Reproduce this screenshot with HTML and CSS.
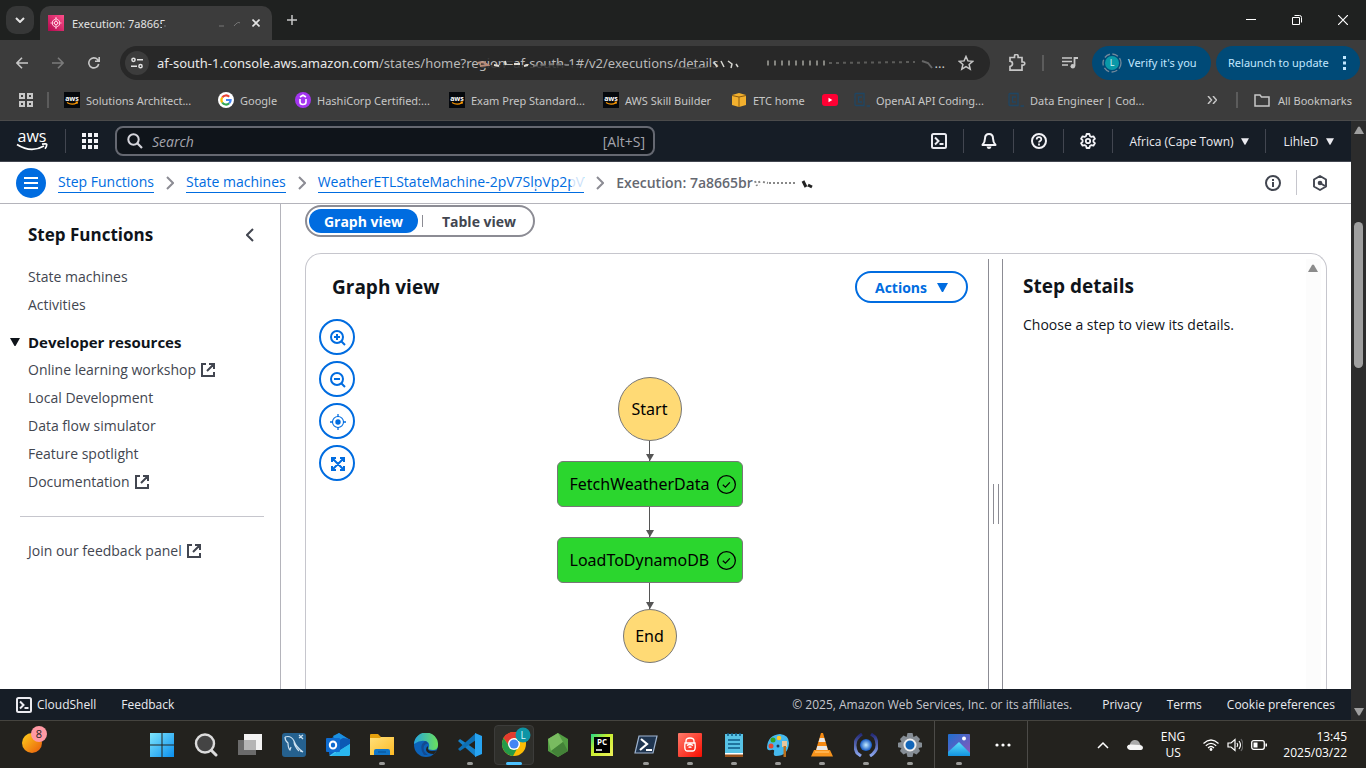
FILE: index.html
```html
<!DOCTYPE html>
<html lang="en">
<head>
<meta charset="utf-8">
<title>Execution details - Step Functions</title>
<link rel="stylesheet" href="styles.css">
</head>
<body>
<svg class="defs" aria-hidden="true">
  <defs>
    <linearGradient id="g-sun" x1="0" y1="0" x2="1" y2="1"><stop offset="0" stop-color="#ffd21c"/><stop offset="1" stop-color="#e8590c"/></linearGradient>
    <linearGradient id="g-win" x1="0" y1="0" x2="1" y2="1"><stop offset="0" stop-color="#7fe6fd"/><stop offset="1" stop-color="#0a8fee"/></linearGradient>
    <linearGradient id="g-folder" x1="0" y1="0" x2="1" y2="1"><stop offset="0" stop-color="#ffe07a"/><stop offset="1" stop-color="#fdba25"/></linearGradient>
    <linearGradient id="g-edge" x1="0" y1="0" x2="1" y2="0"><stop offset="0" stop-color="#25a5e0"/><stop offset="1" stop-color="#6be05a"/></linearGradient>
    <linearGradient id="g-lock" x1="0" y1="0" x2="1" y2="1"><stop offset="0" stop-color="#ff7b6b"/><stop offset="1" stop-color="#f80d00"/></linearGradient>
    <linearGradient id="g-pc" x1="0" y1="0" x2="1" y2="1"><stop offset="0" stop-color="#21d789"/><stop offset="0.4" stop-color="#c5ee2e"/><stop offset="1" stop-color="#eff15a"/></linearGradient>
    <linearGradient id="g-photo" x1="0" y1="0" x2="1" y2="1"><stop offset="0" stop-color="#1e6fd0"/><stop offset="1" stop-color="#9156b8"/></linearGradient>
    <linearGradient id="g-mtn" x1="0" y1="0" x2="0" y2="1"><stop offset="0" stop-color="#5ee0fb"/><stop offset="1" stop-color="#1292e0"/></linearGradient>
    <linearGradient id="g-sfn" x1="0" y1="1" x2="1" y2="0"><stop offset="0" stop-color="#b0084d"/><stop offset="1" stop-color="#ff4f8b"/></linearGradient>
    <linearGradient id="g-swirl" x1="0" y1="0" x2="0" y2="1"><stop offset="0" stop-color="#242a78"/><stop offset="1" stop-color="#8ba6ee"/></linearGradient>
    <radialGradient id="g-globe"><stop offset="0" stop-color="#c6ecff"/><stop offset="1" stop-color="#1257c4"/></radialGradient>
  </defs>
  <symbol id="i-awsfav" viewBox="0 0 16 16"><rect width="16" height="16" fill="#05080c"/><text x="8" y="9" class="fav-text">aws</text><path d="M3 10.500q5 3.200 10 .2M11.500 10h2l-.6 1.900" fill="none" stroke="#ff9900" stroke-width="1.100"/></symbol>
  <symbol id="i-cc" viewBox="0 0 16 16"><path d="M1 2.500q0-1 1-1h8v12H2q-1 0-1-1zM8 5H4.500v5H8M12.500 14h3.500" fill="none" stroke="#1f4663" stroke-width="1.300"/></symbol>
  <symbol id="i-shell" viewBox="0 0 16 16"><rect x="1" y="1" width="14" height="14" rx="1.500" fill="none" stroke="currentColor" stroke-width="2"/><path d="M4 4.500 7.500 8 4 11.500M8.500 11h4" fill="none" stroke="currentColor" stroke-width="2"/></symbol>
  <symbol id="i-ext" viewBox="0 0 16 16"><path d="M6 2H2v12h12v-4M9 2h5v5M14 2 7 9" fill="none" stroke="currentColor" stroke-width="2"/></symbol>
  <symbol id="i-caret" viewBox="0 0 10 8"><path d="M0 0h10L5.500 8h-1z" fill="currentColor"/></symbol>
  <symbol id="i-next" viewBox="0 0 8 14"><path d="M1 1l6 6-6 6" fill="none" stroke="#8c8c94" stroke-width="2"/></symbol>
  <symbol id="i-check" viewBox="0 0 18 18"><circle cx="9" cy="9" r="8.400" fill="none" stroke="#000" stroke-width="1.200"/><path d="M5.500 9.300 8 11.500l4.200-4.500" fill="none" stroke="#000" stroke-width="1.200"/></symbol>
  <symbol id="i-tip" viewBox="0 0 8 7"><path d="M0 0h8L4 7z" fill="#555"/></symbol>
</svg>

<header class="browser">
  <div class="tabstrip">
    <button class="tab-search" aria-label="Search tabs"><svg width="10" height="6" viewBox="0 0 10 6"><path d="M1 1l4 4 4-4" fill="none" stroke="#e3e3e3" stroke-width="2"/></svg></button>
    <div class="tab">
      <svg width="16" height="16" viewBox="0 0 16 16"><rect width="16" height="16" fill="url(#g-sfn)"/><path d="M8 2v12M8 3.500L4.500 6v4L8 12.500l3.500-2.500V6zM2.500 8h3M10.500 8h3" fill="none" stroke="#ffc4d8" stroke-width="1"/><circle cx="8" cy="8" r="1.700" fill="#e52c73" stroke="#ffd0e0"/></svg>
      <span class="tab-title">Execution: 7a8665</span>
      <svg class="tab-smudge" width="82" height="14" viewBox="0 0 82 14"><path d="M0 6h7v7H0z" fill="#3c3c3c"/><path d="M2 10h2M57 10h5M72 10q4-5 6-3" stroke="#777" stroke-width="1" fill="none"/></svg>
      <button class="plain" aria-label="Close tab"><svg width="8" height="8" viewBox="0 0 8 8"><path d="M0.500.5l7 7M7.500.5l-7 7" stroke="#e3e3e3" stroke-width="1.600"/></svg></button>
    </div>
    <button class="plain new-tab" aria-label="New tab"><svg width="10" height="10" viewBox="0 0 10 10"><path d="M5 0v10M0 5h10" stroke="#c7c7c7" stroke-width="1.500"/></svg></button>
    <div class="win-controls">
      <button class="plain" aria-label="Minimize"><svg width="10" height="10" viewBox="0 0 10 10"><path d="M0 4.500h10" stroke="#fff"/></svg></button>
      <button class="plain" aria-label="Restore"><svg width="10" height="10" viewBox="0 0 10 10"><path d="M.5 2.500h7v7h-7zM2.500.5h5q2 0 2 2v5" fill="none" stroke="#fff"/></svg></button>
      <button class="plain" aria-label="Close"><svg width="10" height="10" viewBox="0 0 10 10"><path d="M0 0l10 10M10 0L0 10" stroke="#fff" stroke-width="1.200"/></svg></button>
    </div>
  </div>

  <div class="toolbar">
    <div class="nav-buttons">
      <button class="plain" aria-label="Back"><svg width="12" height="12" viewBox="0 0 12 12"><path d="M12 6H1M6 .8L.9 6 6 11.200" fill="none" stroke="#c7c7c7" stroke-width="1.600"/></svg></button>
      <button class="plain" aria-label="Forward"><svg width="12" height="12" viewBox="0 0 12 12"><path d="M0 6h11M6 .8L11.100 6 6 11.200" fill="none" stroke="#7b7b7b" stroke-width="1.600"/></svg></button>
      <button class="plain" aria-label="Reload"><svg width="12" height="12" viewBox="0 0 12 12"><path d="M10.700 7A5 5 0 1 1 9.600 2.600L11 4M11.200 0v4.300H7" fill="none" stroke="#c7c7c7" stroke-width="1.600"/></svg></button>
    </div>
    <div class="omnibox">
      <button class="site-info" aria-label="View site information"><svg width="12" height="12" viewBox="0 0 12 12"><g fill="none" stroke="#e3e3e3" stroke-width="1.500"><circle cx="2.500" cy="2.800" r="1.600"/><path d="M6 2.800h6M0 9.200h6"/><circle cx="9.500" cy="9.200" r="1.600"/></g></svg></button>
      <div class="url"><span class="host">af-south-1.console.aws.amazon.com</span>/states/home?region=af-south-1#/v2/executions/details
        <svg class="url-smudge" viewBox="0 0 470 18" width="470" height="18"><path d="M12 11h100v3H12zM14 4h18v3H14zM38 5h8v4h-8zM205 13h66v4h-66z" fill="#282828" opacity=".85"/><g fill="none"><path d="M11 9q5-2 10 2l-8 1" stroke="#b98a76" stroke-width="2"/><path d="M27 11l5 1m6-5l1 4m8-1h6m4 2l4-1" stroke="#e0ddd6" stroke-width="2"/><path d="M66 12q14-3 36-1" stroke="#777" stroke-width="2" stroke-dasharray="5 3"/><path d="M210 13q14 3 30 0" stroke="#666" stroke-width="1"/><path d="M247 8l3 5m4-6l3 6m4-6l4 3-1 4m5-4l2 3" stroke="#d5d5d0" stroke-width="1.500"/><path d="M300 9l60 0" stroke="#858580" stroke-width="5" stroke-dasharray="2 5"/><path d="M362 9l86-1" stroke="#5c5c5a" stroke-width="2" stroke-dasharray="3 4"/><path d="M455 7l6 2 4 5" stroke="#666" stroke-width="2"/></g></svg>
      </div>
      <span class="url-end">...</span>
      <button class="plain star" aria-label="Bookmark this tab"><svg width="16" height="16" viewBox="0 0 16 16"><path d="M8 1.500l1.900 4.400 4.800.4-3.600 3.100 1.100 4.700L8 11.600l-4.200 2.500 1.100-4.700L1.300 6.300l4.800-.4z" fill="none" stroke="#c7c7c7" stroke-width="1.500"/></svg></button>
    </div>
    <button class="plain ext" aria-label="Extensions"><svg width="18" height="18" viewBox="0 0 18 18"><path d="M2 3.500h4.500V2.200a1.800 1.800 0 0 1 3.600 0v1.300H14V8h1.200a1.600 1.600 0 0 1 0 3.200H14v5H2v-3.700q2.500-.5 2.500-2.700T2 7.200z" fill="none" stroke="#c7c7c7" stroke-width="1.700"/></svg></button>
    <span class="bar"></span>
    <button class="plain media" aria-label="Media controls"><svg width="16" height="14" viewBox="0 0 16 14"><path d="M0 2h10M0 5.500h10M0 9h6" stroke="#c7c7c7" stroke-width="1.600"/><path d="M16 2h-3.500v8" fill="none" stroke="#c7c7c7" stroke-width="1.800"/><circle cx="10.800" cy="10.200" r="2.300" fill="#c7c7c7"/></svg></button>
    <button class="pill verify"><svg width="20" height="20" viewBox="0 0 20 20"><circle cx="10" cy="10" r="9" fill="none" stroke="#73899b" stroke-width="1.300" stroke-dasharray="6 2.500"/><circle cx="10" cy="10" r="7" fill="#0a99a8"/><text x="10" y="13" class="avatar-text">L</text></svg>Verify it's you</button>
    <button class="pill relaunch">Relaunch to update<svg width="4" height="14" viewBox="0 0 4 14"><path d="M0 0h3v3H0zM0 5.500h3v3H0zM0 11h3v3H0z" fill="#c2e7ff"/></svg></button>
  </div>

  <nav class="bookmarks" aria-label="Bookmarks">
    <button class="plain apps" aria-label="Apps"><svg width="14" height="14" viewBox="0 0 14 14"><path d="M1 1h4v4H1zM9 1h4v4H9zM1 9h4v4H1zM9 9h4v4H9z" fill="none" stroke="#c7c7c7" stroke-width="2"/></svg></button>
    <span class="bar"></span>
    <a href="#" class="b1"><svg width="16" height="16"><use href="#i-awsfav"/></svg>Solutions Architect...</a>
    <a href="#" class="b2"><svg width="16" height="16" viewBox="0 0 16 16"><circle cx="8" cy="8" r="8" fill="#fff"/><g fill="none" stroke-width="2.200"><path d="M4.200 5.500A4.600 4.600 0 0 1 11.200 4.700" stroke="#ea4335"/><path d="M4.200 10.500a4.600 4.600 0 0 1 0-5" stroke="#fbbc05"/><path d="M4.200 10.500a4.600 4.600 0 0 0 7 .8" stroke="#34a853"/><path d="M8 8h4.600a4.600 4.600 0 0 1-1.400 3.300" stroke="#4285f4"/></g></svg>Google</a>
    <a href="#" class="b3"><svg width="16" height="16" viewBox="0 0 16 16"><circle cx="8" cy="8" r="8" fill="#a435f0"/><path d="M5 7v3q0 2.500 3 2.500t3-2.500V7M5 5l3-1.800L11 5" fill="none" stroke="#fff" stroke-width="1.600"/></svg>HashiCorp Certified:...</a>
    <a href="#" class="b4"><svg width="16" height="16"><use href="#i-awsfav"/></svg>Exam Prep Standard...</a>
    <a href="#" class="b5"><svg width="16" height="16"><use href="#i-awsfav"/></svg>AWS Skill Builder</a>
    <a href="#" class="b6"><svg width="16" height="16" viewBox="0 0 16 16"><path d="M1 3l7-2 7 2v10l-7 2-7-2z" fill="#f2b02e"/><path d="M1 3.500L8 5l7-1.500M8 5v10" fill="none" stroke="#8a5a10"/></svg>ETC home</a>
    <a href="#" class="b7" aria-label="YouTube"><svg width="16" height="12" viewBox="0 0 16 12"><rect width="16" height="12" rx="3" fill="#ff0033"/><path d="M6.500 3.800v4.400L10.300 6z" fill="#fff"/></svg></a>
    <a href="#" class="b8"><svg width="16" height="16"><use href="#i-cc"/></svg>OpenAI API Coding...</a>
    <a href="#" class="b9"><svg width="16" height="16"><use href="#i-cc"/></svg>Data Engineer | Cod...</a>
    <button class="plain more" aria-label="More bookmarks"><svg width="10" height="8" viewBox="0 0 10 8"><path d="M1 0l3.500 4L1 8M6 0l3.500 4L6 8" fill="none" stroke="#c7c7c7" stroke-width="1.500"/></svg></button>
    <span class="bar"></span>
    <button class="plain all"><svg width="16" height="13" viewBox="0 0 16 13"><path d="M1 1h5l1.500 2H15v9H1z" fill="none" stroke="#c7c7c7" stroke-width="1.500"/></svg>All Bookmarks</button>
  </nav>
</header>

<div class="viewport">
  <div class="console">
    <header class="aws-nav">
      <a href="#" class="aws-logo" aria-label="AWS home"><svg width="34" height="24" viewBox="0 0 34 24"><text x="16" y="13" class="logo-text">aws</text><path d="M1 15.500q14 9 27 1.500M26 15.200q5-1 4.700.6 0 2-1.700 4" fill="none" stroke="#fff" stroke-width="1.700"/></svg></a>
      <span class="sep"></span>
      <button class="plain grid-btn" aria-label="Services"><svg width="16" height="16" viewBox="0 0 16 16"><path d="M0 0h4v4H0zM6 0h4v4H6zM12 0h4v4h-4zM0 6h4v4H0zM6 6h4v4H6zM12 6h4v4h-4zM0 12h4v4H0zM6 12h4v4H6zM12 12h4v4h-4z" fill="#f3f3f7"/></svg></button>
      <label class="search">
        <svg width="16" height="16" viewBox="0 0 16 16"><circle cx="6.500" cy="6.500" r="5.200" fill="none" stroke="#d5d5dc" stroke-width="2"/><path d="M10.300 10.300l4.700 4.700" stroke="#d5d5dc" stroke-width="2.200"/></svg>
        <input type="search" placeholder="Search" aria-label="Search">
        <span>[Alt+S]</span>
      </label>
      <div class="aws-tools">
        <button class="plain" aria-label="CloudShell"><svg width="16" height="16"><use href="#i-shell"/></svg></button>
        <button class="plain" aria-label="Notifications"><svg width="16" height="16" viewBox="0 0 16 16"><path d="M8 1q-4 0-4 4.500 0 3.500-2.500 6.500h13Q12 9 12 5.500 12 1 8 1z" fill="none" stroke="#f3f3f7" stroke-width="2" stroke-linejoin="round"/><path d="M5.500 13.500h5q-.5 2.500-2.500 2.500t-2.500-2.500z" fill="#f3f3f7"/></svg></button>
        <button class="plain" aria-label="Help"><svg width="16" height="16" viewBox="0 0 16 16"><circle cx="8" cy="8" r="7" fill="none" stroke="#f3f3f7" stroke-width="2"/><path d="M5.700 6.500q0-2.300 2.300-2.300t2.300 2q0 1.300-1.300 1.900-1 .5-1 1.400M8 10.600v1.900" fill="none" stroke="#f3f3f7" stroke-width="1.800"/></svg></button>
        <button class="plain" aria-label="Settings"><svg width="16" height="16" viewBox="0 0 16 16"><path d="M6.600 1h2.800l.5 2 1.500.9 2-.6 1.500 2.500L13.400 7.200v1.600l1.500 1.400-1.500 2.500-2-.6-1.500.9-.5 2H6.600l-.5-2-1.500-.9-2 .6-1.500-2.500 1.500-1.400V7.200L1.100 5.800l1.500-2.500 2 .6L6.100 3z" fill="none" stroke="#f3f3f7" stroke-width="1.800" stroke-linejoin="round"/><circle cx="8" cy="8" r="2.200" fill="none" stroke="#f3f3f7" stroke-width="1.800"/></svg></button>
        <button class="plain region">Africa (Cape Town)<svg width="8" height="7"><use href="#i-caret"/></svg></button>
        <button class="plain user">LihleD<svg width="8" height="7"><use href="#i-caret"/></svg></button>
      </div>
    </header>

    <div class="crumbs">
      <button class="menu-btn" aria-label="Open navigation"><svg width="14" height="12" viewBox="0 0 14 12"><path d="M0 1h14M0 6h14M0 11h14" stroke="#fff" stroke-width="2"/></svg></button>
      <nav class="crumb-list" aria-label="Breadcrumbs">
        <a href="#">Step Functions</a>
        <svg width="8" height="14"><use href="#i-next"/></svg>
        <a href="#">State machines</a>
        <svg width="8" height="14"><use href="#i-next"/></svg>
        <a href="#">WeatherETLStateMachine-2pV7SlpVp2pV<svg class="link-smudge" width="76" height="16" viewBox="0 0 76 16"><path d="M10 0h4v3h-4zM26 11l10 4H25zM34 0l5 0-3 5zM62 0h14v15H64z" fill="#fff" opacity=".8"/></svg></a>
        <svg width="8" height="14"><use href="#i-next"/></svg>
        <span class="current">Execution: 7a8665br<svg class="exec-smudge" width="72" height="12" viewBox="0 0 72 12"><path d="M2 9h9v3H2z" fill="#fff"/><path d="M8 3l2 5M12 3l1 4M16 4l5 1M22 5h26" stroke="#888" stroke-width="2" stroke-dasharray="2 2" fill="none"/><path d="M56 3l3 6M61 7l4 2" stroke="#222" stroke-width="3"/></svg></span>
      </nav>
      <button class="plain info" aria-label="Info"><svg width="16" height="16" viewBox="0 0 16 16"><circle cx="8" cy="8" r="7" fill="none" stroke="#424650" stroke-width="2"/><path d="M8 4v2M8 7v5" stroke="#424650" stroke-width="2"/></svg></button>
      <button class="plain q" aria-label="Resources"><svg width="16" height="16" viewBox="0 0 16 16"><path d="M8 1l6 3.500v7L8 15l-6-3.500v-7z" fill="none" stroke="#424650" stroke-width="1.900" stroke-linejoin="round"/><circle cx="8" cy="8" r="2.300" fill="#424650"/><path d="M8 8l5 3" stroke="#424650" stroke-width="2"/></svg></button>
    </div>

    <div class="body">
      <aside class="side">
        <div class="side-head"><h2>Step Functions</h2><button class="plain" aria-label="Close navigation"><svg width="8" height="14" viewBox="0 0 8 14"><path d="M7 1L1 7l6 6" fill="none" stroke="#424650" stroke-width="2"/></svg></button></div>
        <ul>
          <li><a href="#">State machines</a></li>
          <li><a href="#">Activities</a></li>
        </ul>
        <button class="plain section"><svg width="10" height="8"><use href="#i-caret"/></svg>Developer resources</button>
        <ul>
          <li><a href="#">Online learning workshop<svg width="16" height="16"><use href="#i-ext"/></svg></a></li>
          <li><a href="#">Local Development</a></li>
          <li><a href="#">Data flow simulator</a></li>
          <li><a href="#">Feature spotlight</a></li>
          <li><a href="#">Documentation<svg width="16" height="16"><use href="#i-ext"/></svg></a></li>
        </ul>
        <hr>
        <ul><li><a href="#">Join our feedback panel<svg width="16" height="16"><use href="#i-ext"/></svg></a></li></ul>
      </aside>

      <main class="main">
        <div class="segments">
          <button class="seg on">Graph view</button><span></span><button class="seg">Table view</button>
        </div>
        <section class="panel">
          <div class="graph">
            <div class="graph-head"><h1>Graph view</h1><button class="actions">Actions<svg width="11" height="9"><use href="#i-caret"/></svg></button></div>
            <div class="canvas">
              <div class="zoomers">
                <button aria-label="Zoom in"><svg width="16" height="16" viewBox="0 0 16 16"><circle cx="7" cy="7" r="6" fill="none" stroke="currentColor" stroke-width="2"/><path d="M11 11l4 4M4 7h6M7 4v6" stroke="currentColor" stroke-width="2"/></svg></button>
                <button aria-label="Zoom out"><svg width="16" height="16" viewBox="0 0 16 16"><circle cx="7" cy="7" r="6" fill="none" stroke="currentColor" stroke-width="2"/><path d="M11 11l4 4M4 7h6" stroke="currentColor" stroke-width="2"/></svg></button>
                <button aria-label="Center"><svg width="16" height="16" viewBox="0 0 16 16"><circle cx="8" cy="8" r="5.500" fill="none" stroke="currentColor" stroke-width="1.100"/><circle cx="8" cy="8" r="2.700" fill="currentColor"/><path d="M8 0v3M8 13v3M0 8h3M13 8h3" stroke="currentColor" stroke-width="1.300"/></svg></button>
                <button aria-label="Fit to screen"><svg width="16" height="16" viewBox="0 0 16 16"><path d="M6 2H2v4M10 2h4v4M6 14H2v-4M10 14h4v-4M2 2l12 12M14 2L2 14" fill="none" stroke="currentColor" stroke-width="2"/></svg></button>
              </div>
              <div class="flow">
                <div class="node round start">Start</div>
                <div class="edge e1"><svg width="8" height="7"><use href="#i-tip"/></svg></div>
                <div class="node state">FetchWeatherData<svg width="19" height="19"><use href="#i-check"/></svg></div>
                <div class="edge e2"><svg width="8" height="7"><use href="#i-tip"/></svg></div>
                <div class="node state">LoadToDynamoDB<svg width="19" height="19"><use href="#i-check"/></svg></div>
                <div class="edge e3"><svg width="8" height="7"><use href="#i-tip"/></svg></div>
                <div class="node round end">End</div>
              </div>
            </div>
          </div>
          <div class="splitter"><span></span></div>
          <div class="details">
            <div class="details-text"><h1>Step details</h1><p>Choose a step to view its details.</p></div>
            <div class="inner-scroll"><svg width="10" height="8" viewBox="0 0 10 8"><path d="M0 8l4-7q1-1 2 0l4 7z" fill="#8b8b8b"/></svg></div>
          </div>
        </section>
      </main>
    </div>

    <footer class="aws-foot">
      <button class="plain shell"><svg width="16" height="16"><use href="#i-shell"/></svg>CloudShell</button>
      <a href="#" class="feedback">Feedback</a>
      <span class="copy">© 2025, Amazon Web Services, Inc. or its affiliates.</span>
      <a href="#">Privacy</a><a href="#">Terms</a><a href="#">Cookie preferences</a>
    </footer>
  </div>
  <div class="scrollbar">
    <svg width="10" height="8" viewBox="0 0 10 8"><path d="M0 8l4-7q1-1 2 0l4 7z" fill="#9f9f9f"/></svg>
    <div class="track"><div class="thumb"></div></div>
    <svg width="10" height="8" viewBox="0 0 10 8"><path d="M0 0l4 7q1 1 2 0l4-7z" fill="#9f9f9f"/></svg>
  </div>
</div>

<footer class="taskbar">
  <button class="weather" aria-label="Widgets"><svg width="26" height="28" viewBox="0 0 26 28"><circle cx="10" cy="17" r="10" fill="url(#g-sun)"/><circle cx="17" cy="8" r="8" fill="#ff99a4"/><text x="17" y="12" class="badge-text">8</text></svg></button>
  <div class="apps-row">
    <button class="app" aria-label="Start"><svg width="24" height="24" viewBox="0 0 24 24"><path d="M0 0h11.500v11.500H0zM12.500 0H24v11.500H12.500zM0 12.500h11.500V24H0zM12.500 12.500H24V24H12.500z" fill="url(#g-win)"/></svg></button>
    <button class="app" aria-label="Search"><svg width="24" height="24" viewBox="0 0 24 24"><circle cx="11" cy="10.500" r="9" fill="#444" stroke="#dcdcdc" stroke-width="2.400"/><path d="M17.500 17.500L22 22" stroke="#dcdcdc" stroke-width="3" stroke-linecap="round"/></svg></button>
    <button class="app" aria-label="Task view"><svg width="24" height="24" viewBox="0 0 24 24"><path d="M6 1h18v16H6z" fill="#f2f2f2"/><path d="M0 7h18v15H0z" fill="#6b6b6b"/><path d="M6 7h12v10H6z" fill="#b5b5b5"/></svg></button>
    <button class="app" aria-label="MySQL Workbench"><svg width="24" height="24" viewBox="0 0 24 24"><rect width="24" height="24" rx="3" fill="#25618f"/><path d="M3 4q6-2 9 4 2 6 9 11l-3-1M3 4q0 4 3 6 0 5 2 7l1-3M12 8q0 5 5 10M17 2l4 4M21 2l-4 3" fill="none" stroke="#cfe3f2" stroke-width="1.200"/></svg></button>
    <button class="app" aria-label="Outlook"><svg width="24" height="24" viewBox="0 0 24 24"><path d="M3 7l10-7 11 7v13q0 3-3 3H6q-3 0-3-3z" fill="#0b63c5"/><path d="M7 3l6-3 11 7-11 8z" fill="#1b90e0"/><path d="M24 8v13q0 2-2 2H3z" fill="#42c8f5"/><path d="M24 6v5L10 20V9l7-4z" fill="#0c58b4"/><path d="M6 22l18-11v10q0 2-2 2H6z" fill="#29b6ee"/><rect y="5" width="14" height="14" rx="1" fill="#0f6cd0"/><ellipse cx="7" cy="12" rx="3.200" ry="3.600" fill="none" stroke="#fff" stroke-width="2"/></svg></button>
    <button class="app open" aria-label="File Explorer"><svg width="24" height="24" viewBox="0 0 24 24"><path d="M0 2q0-1 1-1h7l3 3h12v6H0z" fill="#e5a00c"/><path d="M0 5h10l1 -1h13v18H0z" fill="url(#g-folder)"/><path d="M4 22v-4q0-2 2-2h12q2 0 2 2v4z" fill="#0f74c8"/><path d="M8 19h8" stroke="#064f92"/></svg></button>
    <button class="app" aria-label="Edge"><svg width="24" height="24" viewBox="0 0 24 24"><circle cx="12" cy="12" r="12" fill="#0c62b8"/><path d="M0 11A12 12 0 0 1 24 12q0 5-5 5-6 0-4-3 1-5-4-6T0 11z" fill="url(#g-edge)"/><path d="M11 8q-7 5-1 14h4q-6-4-4-9 2-3 4-2-1-3-3-3z" fill="#134a90"/><path d="M14 14q-1 4 4 4 4 0 5-1l-3 4q-7 0-8-4 0-3 2-4z" fill="#23221e"/></svg></button>
    <button class="app open" aria-label="Visual Studio Code"><svg width="24" height="24" viewBox="0 0 24 24"><path d="M0 8l2-2 16 11v7z" fill="#1681c9"/><path d="M0 16l2 2L18 7V0z" fill="#0d6fb4"/><path d="M17 0l7 3v18l-7 3z" fill="#27a4f2"/></svg></button>
    <button class="app active" aria-label="Chrome"><svg width="30" height="30" viewBox="0 0 30 30"><circle cx="13" cy="17" r="12" fill="#fbbc05"/><path d="M2.600 11A12 12 0 0 1 23.400 11H13L8 19z" fill="#e33b2e"/><path d="M2.600 11A12 12 0 0 0 12 29l5-9-9-1z" fill="#249a48"/><circle cx="13" cy="17" r="6" fill="#fff"/><circle cx="13" cy="17" r="4.600" fill="#4285f4"/><circle cx="22" cy="8" r="7.500" fill="#0d94a5"/><text x="22" y="11.500" class="avatar-text big">L</text></svg></button>
    <button class="app" aria-label="Node"><svg width="24" height="24" viewBox="0 0 24 24"><path d="M12 0l10 6v12l-10 6-10-6V6z" fill="#539e43"/><path d="M12 0L2 6l3 12 12-9z" fill="#79bb60"/><path d="M5 18l12-9 5 9-10 6z" fill="#448238"/></svg></button>
    <button class="app" aria-label="PyCharm"><svg width="22" height="22" viewBox="0 0 22 22"><rect width="22" height="22" fill="url(#g-pc)"/><rect x="3" y="3" width="16" height="16" fill="#000"/><text x="11" y="11" class="pc-text">PC</text><path d="M5 16h6" stroke="#fff" stroke-width="1.500"/></svg></button>
    <button class="app open" aria-label="PowerShell"><svg width="24" height="20" viewBox="0 0 24 20"><path d="M5 1h18l-4 17H1z" fill="#1f3550" stroke="#9fb4cf" stroke-width="1.200"/><path d="M7 4l6 5-7 6M12 15h6" fill="none" stroke="#fff" stroke-width="2.200"/></svg></button>
    <button class="app open" aria-label="VPN"><svg width="24" height="24" viewBox="0 0 24 24"><rect width="24" height="24" rx="1" fill="url(#g-lock)"/><path d="M8 10V8q0-3 4-3t4 3v2M7 10h10q1 8-2 8H9q-3 0-2-8zM9 12.500q3-2 6 0M10.500 14.500q1.500-1 3 0" fill="none" stroke="#fff" stroke-width="1.300"/></svg></button>
    <button class="app open" aria-label="Notepad"><svg width="18" height="24" viewBox="0 0 18 24"><path d="M0 1h18v20H0z" fill="#57c3e6"/><path d="M0 20h18v4H0z" fill="#96511c"/><path d="M0 20h18v1.500H0z" fill="#fff"/><path d="M3 7h12M3 11h12M3 15h12M3 0v3M7 0v3M11 0v3M15 0v3" stroke="#0f5b86" stroke-width="1.500"/></svg></button>
    <button class="app open" aria-label="Paint"><svg width="24" height="24" viewBox="0 0 24 24"><path d="M14 1q9 1 9 9-1 13-13 13-3 0-2-4 1-3-3-2-4 1-4-3Q2 2 14 1z" fill="#45b9ee"/><circle cx="5" cy="13" r="2.500" fill="#e8472e"/><circle cx="7" cy="7" r="2.500" fill="#35a51e"/><circle cx="13" cy="5" r="2.300" fill="#ffc629"/><path d="M16 8h5v6h-5z" fill="#e7c7a0"/><path d="M17.500 13h2.500v11h-2.500z" fill="#b8701f"/><circle cx="12" cy="13" r="1.500" fill="#173d5a"/></svg></button>
    <button class="app open" aria-label="VLC"><svg width="22" height="24" viewBox="0 0 22 24"><path d="M10 0h2l6 20H4z" fill="#f58a13"/><path d="M8.800 5h4.400l1.300 4H7.500zM6.300 13h9.400l1 4H5.300z" fill="#e8e8e8"/><path d="M3 17h16l3 6.500H0z" fill="#f7941d"/><path d="M4 18h14v2H4z" fill="#ffb24d"/></svg></button>
    <button class="app open" aria-label="Sync"><svg width="24" height="24" viewBox="0 0 24 24"><circle cx="12" cy="12" r="6" fill="url(#g-globe)"/><path d="M8 1Q-3 8 3 20l4 3M16 23q11-7 5-19l-4-3" fill="none" stroke="url(#g-swirl)" stroke-width="3"/></svg></button>
    <button class="app open" aria-label="Settings"><svg width="24" height="24" viewBox="0 0 24 24"><path d="M9.500 0h5l1 4 3-1.500 3.500 3.500-1.500 3 3.500.7v4.600l-3.500.7 1.500 3-3.500 3.500-3-1.500-1 4h-5l-1-4-3 1.500L2 18l1.500-3L0 14.300V9.700L3.500 9 2 6l3.500-3.500 3 1.500z" fill="#868e96"/><circle cx="12" cy="12" r="5.500" fill="#1165b8" stroke="#eee" stroke-width="2"/></svg></button>
  </div>
  <div class="apps-row pinned">
    <button class="app open" aria-label="Photos"><svg width="22" height="22" viewBox="0 0 22 22"><rect width="22" height="22" rx="1" fill="url(#g-photo)"/><path d="M0 18L11 8l11 11v3H0z" fill="url(#g-mtn)"/><circle cx="16" cy="4.500" r="2" fill="#fff"/></svg></button>
    <button class="app" aria-label="More"><svg width="16" height="4" viewBox="0 0 16 4"><circle cx="2" cy="2" r="1.600" fill="#fff"/><circle cx="8" cy="2" r="1.600" fill="#fff"/><circle cx="14" cy="2" r="1.600" fill="#fff"/></svg></button>
  </div>
  <div class="tray">
    <button class="plain" aria-label="Hidden icons"><svg width="12" height="8" viewBox="0 0 12 8"><path d="M1 7l5-5 5 5" fill="none" stroke="#fff" stroke-width="1.500"/></svg></button>
    <button class="plain" aria-label="OneDrive"><svg width="16" height="12" viewBox="0 0 16 12"><path d="M3 7a5 5 0 0 1 10-2l2 4H1z" fill="#aaa"/><path d="M3 11q-3-1-3-3.500Q1 5 4 5.500l8 .5q4 0 4 3-.5 2-2 2z" fill="#f5f5f5"/></svg></button>
    <button class="plain lang">ENG<br>US</button>
    <button class="plain status" aria-label="Network, volume and battery">
      <svg width="16" height="12" viewBox="0 0 16 12"><g fill="none" stroke="#fff" stroke-width="1.200"><path d="M.5 4.500q7.500-7 15 0M2.800 6.800q5.200-5 10.400 0M5 9q3-3 6 0"/></g><circle cx="8" cy="10.500" r="1.400" fill="#fff"/></svg>
      <svg width="16" height="14" viewBox="0 0 16 14"><g fill="none" stroke="#fff" stroke-width="1.200"><path d="M1 5h3l4-3.500v11L4 9H1zM10 5q1.500 2 0 4M12 3q3 4 0 8"/><path d="M14 1q4 6 0 12" stroke="#666"/></g></svg>
      <svg width="16" height="10" viewBox="0 0 16 10"><rect x=".7" y=".7" width="12.600" height="8.600" rx="2" fill="none" stroke="#fff" stroke-width="1.300"/><path d="M2.500 2.500h4v5h-4zM14.500 3.500h1.500v3h-1.500z" fill="#fff"/></svg>
    </button>
    <button class="plain clock">13:45<br>2025/03/22</button>
  </div>
</footer>
</body>
</html>
```
FILE: styles.css
```css
* { box-sizing: border-box; }
body {
  margin: 0;
  height: 100vh;
  display: flex;
  flex-direction: column;
  overflow: hidden;
  font-family: "Open Sans", "Noto Sans", sans-serif;
  font-size: 14px;
  background: #202020;
}
.defs { position: absolute; width: 0; height: 0; }
svg { flex: none; }
a { color: inherit; text-decoration: none; }
button { font: inherit; color: inherit; margin: 0; }
.plain { border: 0; background: none; padding: 0; display: flex; align-items: center; }
h1, h2, p, ul { margin: 0; padding: 0; }
ul { list-style: none; }

/* Browser chrome */
.browser { flex: none; background: #3c3c3c; color: #c7c7c7; font-family: "Noto Sans", "Open Sans", sans-serif; font-size: 11px; border-bottom: 1px solid #4b4b4b; }
.tabstrip { height: 40px; background: #1f2120; display: flex; align-items: center; padding-left: 6px; }
.tab-search { width: 28px; height: 28px; border: 0; border-radius: 10px; background: #363737; display: flex; align-items: center; justify-content: center; padding: 0; }
.tab { position: relative; align-self: flex-end; margin-left: 6px; width: 232px; height: 34px; padding: 0 12px 0 8px; display: flex; align-items: center; gap: 8px; background: #3c3c3c; border-radius: 10px 10px 0 0; color: #e3e3e3; }
.tab-title { flex: 1; white-space: nowrap; }
.tab-smudge { position: absolute; left: 122px; top: 10px; }
.new-tab { margin-left: 15px; }
.win-controls { margin-left: auto; display: flex; }
.win-controls button { width: 46px; height: 40px; justify-content: center; }
.toolbar { display: flex; align-items: center; height: 45px; padding: 0 6px 0 16px; }
.nav-buttons { display: flex; gap: 24px; width: 104px; }
.omnibox { flex: 1; height: 34px; border-radius: 17px; background: #282828; display: flex; align-items: center; padding: 0 16px 0 5px; font-size: 13px; }
.site-info { width: 24px; height: 24px; border-radius: 50%; border: 0; padding: 0; background: #3c3c3c; display: flex; align-items: center; justify-content: center; }
.url { position: relative; flex: 1; margin-left: 8px; white-space: nowrap; overflow: hidden; color: #b9b9b9; }
.host { color: #e8e8e8; }
.url-smudge { position: absolute; left: 310px; top: 0; }
.star { margin-left: 13px; }
.ext { margin-left: 18px; }
.bar { width: 2px; height: 16px; background: #5c5c5c; }
.ext + .bar { margin-left: 16px; }
.media { margin: 0 14px 0 18px; }
.pill { height: 34px; border: 0; border-radius: 17px; background: #004a77; color: #c2e7ff; display: flex; align-items: center; white-space: nowrap; }
.verify { width: 119px; padding: 0 0 0 10px; gap: 6px; }
.relaunch { width: 144px; margin-left: 5px; padding: 0 13px 0 12px; justify-content: space-between; }
.bookmarks { display: flex; align-items: center; height: 35px; padding: 0 14px 5px 19px; white-space: nowrap; }
.bookmarks a, .all { display: flex; align-items: center; gap: 6px; }
.bookmarks .apps { margin-right: 14px; }
.bookmarks .apps + .bar { margin-right: 15px; }
.b1 { width: 154px; }
.b2 { width: 77px; }
.b3 { width: 154px; }
.b4 { width: 154px; }
.b5 { width: 128px; }
.b6 { width: 91px; }
.b7 { width: 32px; }
.b8 { width: 154px; }
.b9 { width: 140px; }
.more { margin: 0 19px 0 auto; }
.all { margin-left: 16px; }
.bookmarks .all { gap: 8px; }
.fav-text { font: bold 7px "Open Sans", sans-serif; fill: #fff; text-anchor: middle; }
.avatar-text { font: 9px "Open Sans", sans-serif; fill: #d7f7fa; text-anchor: middle; }
.avatar-text.big { font-size: 10px; }

/* Page area */
.viewport { flex: 1; min-height: 0; display: flex; }
.console { flex: 1; min-width: 0; display: flex; flex-direction: column; background: #fff; }
.scrollbar { width: 15px; background: #2c2c2c; display: flex; flex-direction: column; align-items: center; padding: 5px 0 4px; }
.track { flex: 1; width: 9px; padding-top: 88px; }
.thumb { height: 146px; border-radius: 5px; background: #9f9f9f; }

.aws-nav { flex: none; height: 41px; background: #161d26; border-bottom: 1px solid #424650; display: flex; align-items: center; color: #ebebf0; padding-left: 16px; }
.aws-logo { display: flex; }
.logo-text { font: 500 16px "Open Sans", sans-serif; fill: #fff; text-anchor: middle; }
.sep { width: 1px; height: 24px; background: #424650; margin: 0 16px 0 15px; }
.search { display: flex; align-items: center; gap: 9px; width: 540px; height: 30px; margin-left: 17px; padding: 0 8px 0 10px; border: 2px solid #656871; border-radius: 8px; background: #0f141a; color: #a4a4ad; }
.search input { flex: 1; min-width: 0; border: 0; background: none; outline: 0; padding: 0; color: #fff; font: 14px "Open Sans", "Noto Sans", sans-serif; }
.search input::placeholder { color: #a4a4ad; font-style: italic; opacity: 1; }
.aws-tools { margin-left: auto; display: flex; align-items: center; font-size: 12px; font-weight: 500; }
.aws-tools button { height: 24px; width: 50px; justify-content: center; gap: 7px; white-space: nowrap; border-right: 1px solid #424650; }
.aws-tools button:nth-child(4) { width: 49px; }
.aws-tools .region { width: 153px; }
.aws-tools .user { width: 85px; border: 0; }

.crumbs { flex: none; height: 42px; border-bottom: 1px solid #b4b4bb; display: flex; align-items: center; padding: 0 23px 0 16px; }
.menu-btn { width: 30px; height: 30px; border: 0; border-radius: 50%; background: #006ce0; display: flex; align-items: center; justify-content: center; padding: 0; }
.crumb-list { flex: 1; display: flex; align-items: center; gap: 12px; margin-left: 12px; white-space: nowrap; }
.crumb-list a { position: relative; color: #006ce0; line-height: 20px; border-bottom: 1px solid #006ce0; }
.link-smudge { position: absolute; right: 0; top: 2px; }
.current { position: relative; font-weight: 600; color: #656871; }
.exec-smudge { position: absolute; left: calc(100% - 6px); top: 5px; }
.info { padding-right: 15px; border-right: 1px solid #c6c6cd; height: 25px; margin-right: 15px; }

.body { flex: 1; min-height: 0; display: flex; overflow: hidden; }
.side { flex: none; width: 281px; border-right: 1px solid #b4b4bb; padding: 19px 16px 0 28px; color: #424650; }
.side-head { display: flex; justify-content: space-between; align-items: center; padding-right: 10px; margin-bottom: 16px; }
h1, h2 { font-weight: 700; color: #0f141a; line-height: 24px; }
h1 { font-size: 19px; }
h2 { font-size: 17px; }
.side li { height: 28px; line-height: 28px; }
.side li a { display: inline-flex; align-items: center; gap: 4px; white-space: nowrap; }
.section { margin: 8px 0 0 -18px; height: 29px; gap: 8px; font-size: 15px; font-weight: 700; color: #0f141a; }
.side hr { border: 0; border-top: 1px solid #c6c6cd; margin: 20px 0 20px -8px; }

.main { flex: 1; min-width: 0; padding: 1px 24px 0; display: flex; flex-direction: column; }
.segments { flex: none; align-self: flex-start; height: 32px; display: flex; align-items: center; border: 2px solid #8c8c94; border-radius: 16px; padding: 0 2px; }
.segments span { width: 1px; height: 12px; background: #8c8c94; margin: 0 4px; }
.seg { height: 24px; width: 104px; border: 0; padding: 0; background: none; border-radius: 12px; font-weight: 700; color: #424650; }
.seg.on { width: 109px; background: #006ce0; color: #fff; }
.panel { flex: 1; min-height: 0; margin-top: 16px; border: 1px solid #c6c6cd; border-bottom: 0; border-radius: 16px 16px 0 0; display: flex; padding-top: 5px; }
.graph { flex: 1; min-width: 0; display: flex; flex-direction: column; }
.graph-head { display: flex; justify-content: space-between; align-items: center; padding: 12px 20px 0 26px; }
.actions { height: 32px; width: 113px; border: 2px solid #006ce0; border-radius: 16px; background: #fff; color: #006ce0; font-weight: 700; display: flex; align-items: center; justify-content: center; gap: 10px; padding: 0; }
.canvas { flex: 1; display: flex; padding: 16px 13px 0; }
.zoomers { display: flex; flex-direction: column; gap: 6px; width: 36px; }
.zoomers button { width: 36px; height: 36px; border-radius: 50%; border: 2px solid #006ce0; background: #fff; color: #006ce0; display: flex; align-items: center; justify-content: center; padding: 2px 0 0 2px; }
.flow { flex: 1; display: flex; flex-direction: column; align-items: center; padding: 58px 31px 0 0; color: #000; font-family: "Noto Sans", "Open Sans", sans-serif; font-size: 16px; }
.node { border: 1px solid #777; display: flex; align-items: center; justify-content: center; flex: none; }
.round { border-radius: 50%; background: #ffda75; }
.start { width: 64px; height: 64px; }
.end { width: 54px; height: 54px; }
.state { width: 186px; height: 46px; border-radius: 6px; background: #2bd62e; justify-content: space-between; padding: 0 6px 0 12px; }
.edge { width: 8px; flex: none; display: flex; align-items: flex-end; background: linear-gradient(#555, #555) center / 1px 100% no-repeat; }
.e1 { height: 20px; }
.e2 { height: 30px; }
.e3 { height: 26px; }
.splitter { width: 15px; flex: none; border: solid #8c8c94; border-width: 0 1px; display: flex; justify-content: center; padding-top: 225px; }
.splitter span { width: 6px; height: 40px; border: solid #8c8c94; border-width: 0 1px; }
.details { width: 323px; flex: none; display: flex; justify-content: space-between; padding-right: 5px; }
.details-text { padding: 15px 0 0 20px; color: #0f141a; }
.details-text p { margin-top: 17px; line-height: 20px; }
.inner-scroll { width: 15px; background: #fcfcfc; padding: 5px 0 0 2px; display: flex; align-items: flex-start; }

.aws-foot { flex: none; height: 31px; background: #161d26; color: #ebebf0; font-size: 12px; display: flex; align-items: center; padding: 0 16px; white-space: nowrap; }
.shell { gap: 5px; }
.feedback { margin-left: 25px; }
.copy { margin-left: auto; color: #c6c6cd; }
.copy ~ a { margin-left: 25px; }
.copy + a { margin-left: 30px; }

/* Taskbar */
.taskbar { flex: none; height: 48px; background: #23221e; border-top: 1px solid #45443f; display: flex; align-items: center; color: #fff; font-size: 12px; }
.weather { width: 140px; border: 0; background: none; padding: 0 0 9px 22px; display: flex; }
.badge-text { font: 11px "Open Sans", sans-serif; text-anchor: middle; fill: #222; }
.pc-text { font: bold 8px "Open Sans", sans-serif; text-anchor: middle; fill: #fff; }
.apps-row { display: flex; align-self: stretch; align-items: center; }
.app { position: relative; width: 44px; height: 44px; border: 0; background: none; padding: 0; display: flex; align-items: center; justify-content: center; }
.app.open::after, .app.active::after { content: ""; position: absolute; bottom: 2px; left: 19px; width: 6px; height: 3px; border-radius: 2px; background: #9a9a98; }
.app.active::after { left: 14px; width: 16px; background: #4cc2ff; }
.app.active::before { content: ""; position: absolute; inset: 2px; border: 1px solid #3c3c3a; border-radius: 4px; background: rgba(255, 255, 255, 0.06); }
.app.active svg { position: relative; margin-top: -6px; margin-left: 3px; }
.pinned { border: solid #4c4b48; border-width: 0 1px; margin-left: 2px; padding: 0 2px; }
.tray { margin-left: auto; display: flex; align-items: center; padding-right: 19px; }
.tray > * + * { margin-left: 18px; }
.tray .clock { margin-left: 16px; }
.lang, .clock { line-height: 16px; }
.status { gap: 8px; }
.clock { text-align: right; }
```
